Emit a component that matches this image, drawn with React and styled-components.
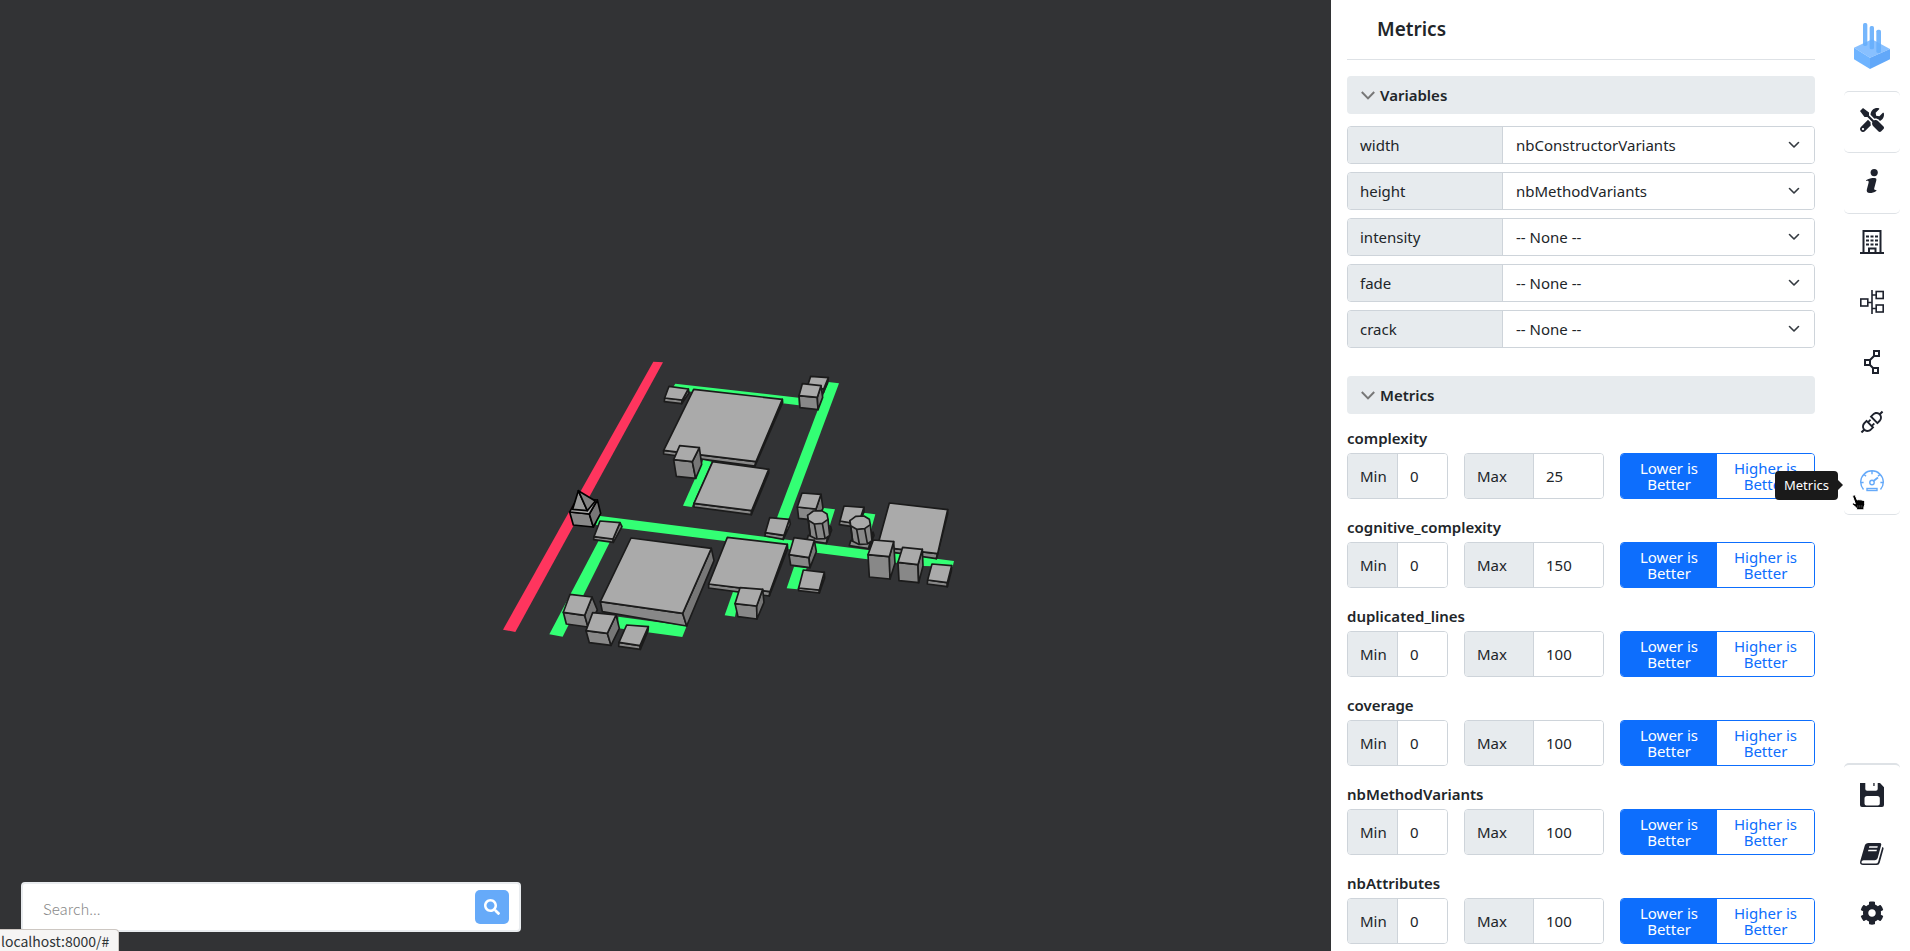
import React, { useState } from "react";
import styled, { createGlobalStyle, css } from "styled-components";
import { FaTools, FaCog, FaSearch } from "react-icons/fa";
import { AiOutlineApi } from "react-icons/ai";

const GlobalStyle = createGlobalStyle`
  *, *::before, *::after { box-sizing: border-box; }
  body { margin: 0; background: #fff; }
  body, button, input, select {
    font-family: "Noto Sans", "Open Sans", sans-serif;
    font-size: 15px;
    color: #212529;
  }
`;

const Page = styled.div`
  display: grid;
  grid-template-columns: minmax(0, 1fr) 500px 79px;
  height: 100vh;
  overflow: hidden;
`;

/* ---------- 3D view ---------- */

const Viewer = styled.main`
  position: relative;
  min-width: 0;
  background: #323335;
`;

const Scene = styled.svg`
  display: block;
  width: 100%;
  height: 100%;
`;

const roads = [
  "556,101 926,143 926,166 545,118",
  "1015,96 1047,100 895,508 861,503",
  "325,497 1392,633 1388,650 1300,648 1132,628 705,573 318,525",
  "327,570 360,575 218,860 178,853",
  "385,800 590,828 577,861 385,835",
  "640,330 665,335 605,471 579,467",
  "730,722 748,728 735,800 704,796",
  "912,650 950,655 922,718 890,715",
  "995,473 1035,478 1020,525 985,515",
  "1120,488 1156,493 1143,540 1115,530",
];

/* Corners of the roof (back left, back right, front right, front left),
   then of the base (front left, front right, back right). */
const backBlocks = [
  [[537, 109], [595, 117], [577, 150], [524, 144], [523, 155], [575, 161], [597, 129]],
  [[611, 118], [877, 148], [798, 335], [521, 301], [521, 312], [795, 348], [878, 158]],
  [[569, 287], [628, 293], [607, 335], [551, 329], [559, 379], [617, 385], [635, 343]],
  [[668, 335], [836, 358], [785, 482], [612, 460], [612, 471], [784, 494], [836, 369]],
  [[962, 79], [1015, 83], [1001, 117], [952, 110], [952, 122], [1000, 128], [1013, 99]],
  [[937, 101], [993, 107], [982, 142], [927, 137], [930, 173], [984, 179], [998, 142]],
  [[936, 429], [993, 433], [978, 477], [922, 471], [926, 505], [980, 511], [999, 475]],
  [[1062, 468], [1122, 472], [1105, 522], [1050, 513], [1048, 524], [1103, 532], [1122, 486]],
  [[1198, 459], [1373, 479], [1343, 611], [1162, 590], [1162, 600], [1339, 626], [1373, 492]],
];

const frontBlocks = [
  [[330, 513], [390, 518], [369, 567], [312, 560], [311, 569], [370, 577], [396, 530]],
  [[423, 564], [664, 595], [578, 790], [331, 755], [337, 785], [590, 828], [672, 632]],
  [[839, 503], [898, 508], [882, 556], [826, 548], [825, 558], [880, 568], [901, 522]],
  [[712, 562], [892, 583], [840, 725], [656, 702], [656, 714], [838, 738], [893, 596]],
  [[912, 563], [973, 571], [957, 623], [897, 614], [902, 645], [960, 653], [979, 605]],
  [[940, 660], [1003, 667], [988, 720], [926, 714], [926, 722], [988, 729], [1004, 684]],
  [[1150, 570], [1211, 575], [1198, 620], [1134, 614], [1138, 681], [1200, 687], [1215, 640]],
  [[1238, 592], [1297, 598], [1284, 644], [1224, 637], [1227, 692], [1286, 698], [1299, 648]],
  [[1326, 642], [1385, 647], [1372, 698], [1313, 690], [1312, 702], [1372, 710], [1384, 663]],
  [[750, 713], [818, 718], [800, 768], [735, 761], [744, 800], [801, 807], [822, 757]],
  [[240, 733], [306, 741], [284, 796], [220, 787], [229, 822], [294, 831], [322, 780]],
  [[308, 788], [378, 795], [352, 850], [288, 842], [298, 878], [363, 886], [388, 835]],
  [[410, 825], [475, 830], [450, 887], [387, 877], [386, 889], [451, 898], [474, 843]],
];

const pts = (list) => list.map((p) => p.join(",")).join(" ");

function Block({ c }) {
  return (
    <g>
      <polygon points={pts([c[3], c[2], c[5], c[4]])} fill="#888888" />
      <polygon points={pts([c[1], c[6], c[5], c[2]])} fill="#777777" />
      <polygon points={pts([c[0], c[1], c[2], c[3]])} fill="#aaaaaa" />
    </g>
  );
}

function Column({ x, y }) {
  const ring = [[-30, -6], [-13, -19], [12, -20], [28, -10], [31, 6], [14, 18], [-10, 20], [-28, 9]];
  return (
    <g transform={`translate(${x} ${y})`}>
      <polygon points="-28,54 30,62 26,78 -32,69" fill="#888888" />
      <polygon points="30,62 39,28 42,38 26,78" fill="#777777" />
      <polygon points="-30,-6 31,6 36,54 22,64 -4,65 -22,56" fill="#888888" />
      <path d="M-10 20L-2 64M14 18L22 62M-28 9L-22 55" fill="none" />
      <polygon points={pts(ring)} fill="#aaaaaa" />
    </g>
  );
}

function City() {
  return (
    <Scene viewBox="0 0 1331 951" role="img" aria-label="City view">
      <g transform="translate(490 350) scale(0.33333)">
        <polygon points="490,35 519,37 76,846 39,839" fill="#ff355e" />
        {roads.map((r) => (
          <polygon key={r} points={r} fill="#33ff74" />
        ))}
        <g stroke="#1b1b1b" strokeWidth="5" strokeLinejoin="round">
          {backBlocks.map((c, i) => (
            <Block key={i} c={c} />
          ))}
          <Column x={983} y={502} />
          <Column x={1110} y={518} />
          {frontBlocks.map((c, i) => (
            <Block key={i} c={c} />
          ))}
        </g>
        <g stroke="#000" strokeWidth="5" strokeLinejoin="round">
          <Block c={[[262, 444], [322, 450], [298, 492], [239, 486], [250, 525], [310, 531], [332, 490]]} />
          <polygon points="265,422 248,478 292,482" fill="#999999" />
          <polygon points="265,422 292,482 316,453" fill="#808080" />
        </g>
      </g>
    </Scene>
  );
}

const SearchBar = styled.form`
  position: absolute;
  left: 21px;
  bottom: 19px;
  display: flex;
  align-items: center;
  width: 500px;
  height: 50px;
  padding: 0 10px 0 20px;
  background: #fff;
  border: 2px solid #e9ecef;
  border-radius: 4px;
`;

const SearchInput = styled.input`
  flex: 1;
  min-width: 0;
  padding: 2px 0 0;
  border: 0;
  outline: 0;
  background: transparent;
  font-family: "Noto Sans CJK SC", "Noto Sans", sans-serif;
  font-weight: 300;
  &::placeholder { color: #8a8a8a; opacity: 1; }
`;

const SearchButton = styled.button`
  display: grid;
  place-items: center;
  width: 34px;
  height: 34px;
  padding: 0;
  border: 0;
  border-radius: 5px;
  background: #66aaf9;
  color: #fff;
`;

const StatusBubble = styled.div`
  position: absolute;
  left: 0;
  bottom: 0;
  width: 119px;
  height: 22px;
  padding-left: 1px;
  background: #f6f5f4;
  border: solid #cdc7c2;
  border-width: 1px 1px 0 0;
  border-top-right-radius: 4px;
  font-family: "Noto Sans CJK SC", "Noto Sans", sans-serif;
  font-size: 14px;
  line-height: 22px;
  color: #2e3436;
`;

/* ---------- Settings panel ---------- */

const Panel = styled.aside`
  min-width: 0;
  padding: 0 16px;
  overflow-y: auto;
  scrollbar-width: none;
`;

const PanelTitle = styled.h1`
  margin: 0 0 16px;
  padding: 0 30px;
  border-bottom: 1px solid #dee2e6;
  font-size: 19px;
  font-weight: 600;
  line-height: 59px;
`;

const SectionButton = styled.button`
  display: flex;
  align-items: center;
  gap: 5px;
  width: 100%;
  height: 38px;
  padding: 0 14px;
  border: 0;
  border-radius: 4px;
  background: #e7ebee;
  font-weight: 600;
`;

const VariableList = styled.div`
  display: flex;
  flex-direction: column;
  gap: 8px;
  padding: 12px 0 28px;
`;

const Group = styled.div`
  display: grid;
  grid-template-columns: ${(p) => p.$columns};
  height: ${(p) => p.$height};
  border: 1px solid #ced4da;
  border-radius: 4px;
  overflow: hidden;
`;

const GroupLabel = styled.label`
  display: flex;
  align-items: center;
  padding-left: 12px;
  background: #e7ebee;
  border-right: 1px solid #ced4da;
`;

const SelectBox = styled.div`
  display: grid;
  grid-template-columns: minmax(0, 1fr);
  align-items: center;
  > * { grid-area: 1 / 1; }
  > svg { justify-self: end; margin-right: 14px; pointer-events: none; }
`;

const Select = styled.select`
  appearance: none;
  height: 100%;
  width: 100%;
  padding: 0 40px 0 13px;
  border: 0;
  background: #fff;
`;

const NumberInput = styled.input`
  min-width: 0;
  width: 100%;
  padding: 0 0 0 12px;
  border: 0;
  background: #fff;
`;

const MetricList = styled.div`
  padding-top: 13px;
`;

const Metric = styled.section`
  margin-bottom: 17px;
`;

const MetricName = styled.h2`
  margin: 0 0 4px;
  font-size: 15px;
  font-weight: 600;
  line-height: 22px;
`;

const MetricRow = styled.div`
  display: grid;
  grid-template-columns: 101px 140px minmax(0, 1fr);
  gap: 16px;
`;

const Toggle = styled.div`
  display: grid;
  grid-template-columns: 96px minmax(0, 1fr);
  height: 46px;
  border: 1px solid #0d6efd;
  border-radius: 4px;
  overflow: hidden;
`;

const ToggleButton = styled.button`
  padding: 0 12px;
  border: 0;
  line-height: 16px;
  background: ${(p) => (p.$active ? "#0d6efd" : "#fff")};
  color: ${(p) => (p.$active ? "#fff" : "#0d6efd")};
`;

const Chevron = () => (
  <svg width="14" height="9" viewBox="0 0 14 9" fill="none" stroke="#777" strokeWidth="2" aria-hidden="true">
    <path d="M.8 1L7 7.4 13.2 1" />
  </svg>
);

const SelectArrow = () => (
  <svg width="12" height="8" viewBox="0 0 12 8" fill="none" stroke="#343a40" strokeWidth="1.6" strokeLinecap="round" strokeLinejoin="round" aria-hidden="true">
    <path d="M1.5 1.5L6 6l4.500-4.500" />
  </svg>
);

const variables = [
  ["width", "nbConstructorVariants"],
  ["height", "nbMethodVariants"],
  ["intensity", "-- None --"],
  ["fade", "-- None --"],
  ["crack", "-- None --"],
];

const options = ["-- None --", "nbConstructorVariants", "nbMethodVariants"];

const metrics = [
  ["complexity", 25],
  ["cognitive_complexity", 150],
  ["duplicated_lines", 100],
  ["coverage", 100],
  ["nbMethodVariants", 100],
  ["nbAttributes", 100],
];

function VariableField({ name, value }) {
  const id = `variable-${name}`;
  return (
    <Group $columns="155px minmax(0, 1fr)" $height="38px">
      <GroupLabel htmlFor={id}>{name}</GroupLabel>
      <SelectBox>
        <Select id={id} defaultValue={value}>
          {options.map((o) => (
            <option key={o}>{o}</option>
          ))}
        </Select>
        <SelectArrow />
      </SelectBox>
    </Group>
  );
}

function MetricField({ name, max }) {
  const [lower, setLower] = useState(true);
  return (
    <Metric>
      <MetricName>{name}</MetricName>
      <MetricRow>
        <Group $columns="50px minmax(0, 1fr)" $height="46px">
          <GroupLabel htmlFor={`${name}-min`}>Min</GroupLabel>
          <NumberInput id={`${name}-min`} defaultValue="0" inputMode="numeric" />
        </Group>
        <Group $columns="69px minmax(0, 1fr)" $height="46px">
          <GroupLabel htmlFor={`${name}-max`}>Max</GroupLabel>
          <NumberInput id={`${name}-max`} defaultValue={max} inputMode="numeric" />
        </Group>
        <Toggle>
          <ToggleButton type="button" $active={lower} aria-pressed={lower} onClick={() => setLower(true)}>
            Lower is Better
          </ToggleButton>
          <ToggleButton type="button" $active={!lower} aria-pressed={!lower} onClick={() => setLower(false)}>
            Higher is Better
          </ToggleButton>
        </Toggle>
      </MetricRow>
    </Metric>
  );
}

/* ---------- Sidebar ---------- */

const Sidebar = styled.nav`
  display: flex;
  flex-direction: column;
  padding: 0 10px 9px 13px;
`;

const LogoLink = styled.a`
  display: flex;
  justify-content: center;
  height: 91px;
  padding-top: 23px;
`;

const edge = css`1px solid #dee2e6`;

const NavLink = styled.a`
  position: relative;
  display: grid;
  place-items: center;
  height: 60px;
  padding-bottom: 4px;
  color: ${(p) => (p.$active ? "#66aaf9" : "#1e222d")};
`;

const NavGroup = styled.div`
  border-bottom: ${edge};
  border-top: ${(p) => (p.$first ? edge : "0")};
  border-radius: ${(p) => (p.$first ? "5px" : "0 0 5px 5px")};
`;

const FooterGroup = styled.div`
  margin-top: auto;
  border-top: 2px solid #dee2e6;
  border-radius: 5px 5px 0 0;
  ${NavLink} {
    height: 59px;
    padding-bottom: 0;
  }
`;

const Tooltip = styled.span`
  position: absolute;
  right: 62px;
  top: 17px;
  padding: 0 9px;
  border-radius: 4px;
  background: #1a1a1a;
  color: #fff;
  font-size: 13px;
  line-height: 29px;
  &::after {
    content: "";
    position: absolute;
    left: 100%;
    top: 9px;
    border: 5px solid transparent;
    border-left-color: #1a1a1a;
    border-right-width: 0;
  }
`;

const Pointer = styled.svg`
  position: absolute;
  left: 7px;
  top: 40px;
  width: 16px;
  height: 18px;
`;

const Logo = () => (
  <svg width="36" height="46" viewBox="42 69 108 138" aria-hidden="true">
    <path d="M42 143l54-25 54 29-60 26z" fill="#88c0ff" />
    <path d="M42 143l48 30v34l-48-29z" fill="#6fb4ff" />
    <path d="M150 147l-60 26v34l60-29z" fill="#62a8f9" />
    <g fill="#66aefc" fillOpacity=".9">
      <rect x="69" y="69" width="13" height="69" rx="5" />
      <rect x="89" y="78" width="13" height="70" rx="5" />
      <rect x="109" y="89" width="14" height="70" rx="5" />
    </g>
  </svg>
);

const Icon = ({ children, ...rest }) => (
  <svg width="24" height="24" viewBox="0 0 24 24" fill="none" stroke="currentColor" aria-hidden="true" {...rest}>
    {children}
  </svg>
);

const InfoIcon = () => (
  <Icon fill="currentColor" stroke="none">
    <circle cx="14.200" cy="3.600" r="3.600" />
    <path d="M6 11.200C8.500 9.600 11.500 9 14.500 9c1.600 0 2.200.8 1.800 2.400l-2 7.600c-.4 1.600.1 2.200 2.200 1.900l-.3 1c-2 1.300-4.300 2.100-6.300 2.100-2.800 0-3.600-1.400-3-3.700l1.700-6.500c.4-1.600-.3-2.200-2.600-1.900z" />
  </Icon>
);

const BuildingIcon = () => (
  <Icon strokeWidth="2">
    <path d="M0 23h24M3.500 23V1h17v22M9 23v-4.500h6.500V23" />
    <path d="M6 6.500h12M6 10.500h12M6 14.500h12" strokeDasharray="3 1.500" />
  </Icon>
);

const TreeIcon = () => (
  <Icon strokeWidth="1.6">
    <path d="M12 0v24M8 12.500h4M12 5h4.500M12 18.500h4.500" />
    <rect x=".8" y="9" width="7" height="7" />
    <rect x="16.200" y="1.500" width="7" height="7" />
    <rect x="16.200" y="15" width="7" height="7" />
  </Icon>
);

const NodesIcon = () => (
  <Icon strokeWidth="2">
    <rect x="14" y="1" width="5" height="5" />
    <rect x="5" y="10" width="5" height="5" />
    <rect x="13" y="18" width="5" height="5" />
    <path d="M9.500 10.500L14.500 5.500M9.500 14.500L13.500 18.500" />
  </Icon>
);

const GaugeIcon = () => (
  <Icon strokeWidth="1.400">
    <path d="M3.500 19.500a11.300 11.300 0 1 1 17 0M12 1v3.200M4 4.200l2 2M20 4.200l-2 2M1 12.500h2.600M20.400 12.500H23" />
    <circle cx="12" cy="12.500" r="2.200" />
    <path d="M13.500 11l4.500-3.500" strokeWidth="1.800" />
    <rect x="7" y="18.500" width="10" height="2" />
  </Icon>
);

const SaveIcon = () => (
  <Icon fill="currentColor" stroke="none">
    <path
      fillRule="evenodd"
      d="M0 0h5.300v6q0 1.800 1.800 1.800h8.800q1.800 0 1.800-1.800V0H20l4 4.300V22q0 2-2 2H2q-2 0-2-2zM7 13q-2.500 0-2.500 2.500v5q0 2 2 2h11.300q2 0 2-2v-5q0-2.500-2.500-2.500z"
    />
    <path d="M13.300 0h1.300v3h-1.300z" />
  </Icon>
);

const BookIcon = () => (
  <Icon fill="currentColor" stroke="none">
    <path fillRule="evenodd" d="M8.500 1h11q2.200 0 1.700 2.100l-3.500 13q-.6 2.100-2.700 2.100H3.500q-1.600 0-2 1.500-.3 1.800 1.300 1.800H16q1.600 0 2.100-1.600L22.300 5q1.600.6 1.200 2.100l-3.800 13.700q-.6 2.200-2.800 2.200H3Q-.6 23 .2 19.300L4.800 3.600Q5.500 1 8.500 1zM9.300 4.300l-.4 1.500h8.500l.4-1.500zM8.400 7.700L8 9.200h8.500l.4-1.500z" />
  </Icon>
);

const Hand = () => (
  <Pointer viewBox="0 0 16 18" aria-hidden="true">
    <path
      d="M2.200 1.200q1.500-.7 2.300.8l1.700 4 1.300-.3 1.700.1 1.500.2 1.700.4 1.300 1v3.400l-.8 2.400v2.600H5.600v-1.800L1.500 10.500q-.5-1.400 1-1.600l1.800.9-2.400-6.700q-.5-1.300.3-1.900z"
      fill="#000"
      stroke="#fff"
    />
    <path d="M6.800 11.200v2.500M8.800 11.200v2.500M10.800 11.200v2.500" stroke="#777" strokeWidth=".6" />
  </Pointer>
);

export default function App() {
  return (
    <Page>
      <GlobalStyle />
      <Viewer>
        <City />
        <SearchBar onSubmit={(e) => e.preventDefault()}>
          <SearchInput type="text" placeholder="Search..." aria-label="Search" />
          <SearchButton type="submit" aria-label="Search">
            <FaSearch size={16} />
          </SearchButton>
        </SearchBar>
        <StatusBubble>localhost:8000/#</StatusBubble>
      </Viewer>
      <Panel>
        <PanelTitle>Metrics</PanelTitle>
        <SectionButton type="button" aria-expanded="true">
          <Chevron />
          Variables
        </SectionButton>
        <VariableList>
          {variables.map(([name, value]) => (
            <VariableField key={name} name={name} value={value} />
          ))}
        </VariableList>
        <SectionButton type="button" aria-expanded="true">
          <Chevron />
          Metrics
        </SectionButton>
        <MetricList>
          {metrics.map(([name, max]) => (
            <MetricField key={name} name={name} max={max} />
          ))}
        </MetricList>
      </Panel>
      <Sidebar>
        <LogoLink href="#" aria-label="Home"><Logo /></LogoLink>
        <NavGroup $first>
          <NavLink href="#" aria-label="Tools"><FaTools size={24} /></NavLink>
        </NavGroup>
        <NavGroup>
          <NavLink href="#" aria-label="Information"><InfoIcon /></NavLink>
        </NavGroup>
        <NavGroup>
          <NavLink href="#" aria-label="Buildings"><BuildingIcon /></NavLink>
          <NavLink href="#" aria-label="Hierarchy"><TreeIcon /></NavLink>
          <NavLink href="#" aria-label="Links"><NodesIcon /></NavLink>
          <NavLink href="#" aria-label="Connections"><AiOutlineApi size={28} /></NavLink>
          <NavLink href="#" $active aria-label="Metrics">
            <GaugeIcon />
            <Tooltip role="tooltip">Metrics</Tooltip>
            <Hand />
          </NavLink>
        </NavGroup>
        <FooterGroup>
          <NavLink href="#" aria-label="Save"><SaveIcon /></NavLink>
          <NavLink href="#" aria-label="Documentation"><BookIcon /></NavLink>
          <NavLink href="#" aria-label="Settings"><FaCog size={24} /></NavLink>
        </FooterGroup>
      </Sidebar>
    </Page>
  );
}
